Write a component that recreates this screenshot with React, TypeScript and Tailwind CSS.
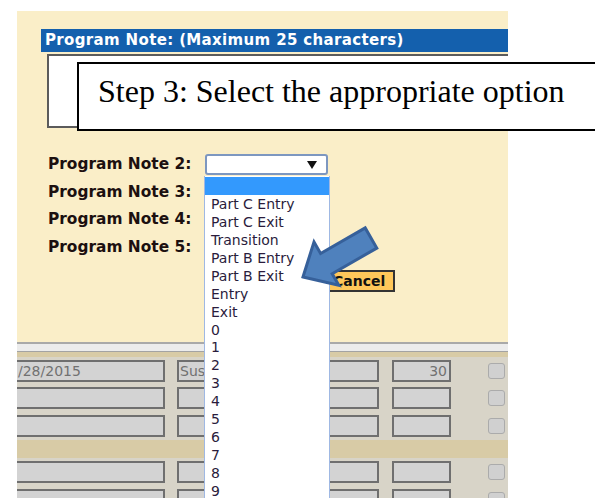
import React from 'react';

const NOTE_OPTIONS = [
  'Part C Entry',
  'Part C Exit',
  'Transition',
  'Part B Entry',
  'Part B Exit',
  'Entry',
  'Exit',
  '0',
  '1',
  '2',
  '3',
  '4',
  '5',
  '6',
  '7',
  '8',
  '9',
];

const NOTE_LABELS = ['Program Note 2:', 'Program Note 3:', 'Program Note 4:', 'Program Note 5:'];

function Field({ width, text, align = 'left', noLeft = false }: { width: string; text?: string; align?: 'left' | 'right'; noLeft?: boolean }) {
  return (
    <div
      className={`${width} h-[22px] shrink-0 bg-[#d3d3d3] border-2 border-[#6f6f6f] ${noLeft ? 'border-l-0' : ''} flex items-center overflow-hidden text-[14px] leading-none text-[#717171] ${
        align === 'right' ? 'justify-end pr-[2px] text-[#5d6e85]' : 'pl-[1px]'
      }`}
    >
      {text}
    </div>
  );
}

function CheckBox() {
  return <div className="w-[17px] h-[16px] shrink-0 rounded-[3px] bg-[#d0d0d0] border border-[#ababab]" />;
}

function GridRow({ date, status, days }: { date?: string; status?: string; days?: string }) {
  return (
    <div className="flex items-center h-[22px]">
      <Field width="w-[148px]" text={date} noLeft />
      <div className="ml-[12px]">
        <Field width="w-[90px]" text={status} />
      </div>
      <div className="ml-[10px]">
        <Field width="w-[102px]" />
      </div>
      <div className="ml-[13px]">
        <Field width="w-[59px]" text={days} align="right" />
      </div>
      <div className="ml-[37px]">
        <CheckBox />
      </div>
    </div>
  );
}

export default function App() {
  return (
    <div className="relative w-[595px] h-[498px] overflow-hidden bg-white font-['DejaVu_Sans',sans-serif]">
      {/* note editor panel */}
      <div className="ml-[17px] mt-[11px] w-[491px] bg-[#faeec8] pt-[18px] pb-[50px]">
        <div className="ml-[24px] h-[23px] bg-[#1460ad] flex items-center pl-[4px] text-[15px] tracking-[0.35px] font-bold text-white whitespace-nowrap">
          Program Note: (Maximum 25 characters)
        </div>
        <div className="ml-[30px] mt-[2px] h-[74px] bg-white border-2 border-r-0 border-[#5b5b5b]" />

        <div className="mt-[23px] pl-[31px]">
          {NOTE_LABELS.map((label, i) => (
            <div key={label} className="flex items-center h-[27.5px]">
              <span className="w-[157px] shrink-0 text-[15.4px] font-bold text-[#1c1010] whitespace-nowrap">{label}</span>
              {i === 0 && (
                <div className="w-[123px] h-[21px] bg-white border-2 border-[#7d97c0] rounded-[3px] flex items-center justify-end pr-[9px]">
                  <svg width="10" height="8" viewBox="0 0 10 8">
                    <polygon points="0,0 10,0 5,8" fill="#111" />
                  </svg>
                </div>
              )}
            </div>
          ))}
        </div>

        <div className="mt-[9px] pl-[308px] flex">
          <button className="w-[70px] h-[22px] bg-[#ffc75a] border-2 border-[#333] text-left pl-[6px] text-[14px] font-bold text-[#111] leading-none">
            Cancel
          </button>
        </div>
      </div>

      {/* separators under the panel */}
      <div className="ml-[17px] w-[491px]">
        <div className="h-[2px] bg-[#a9a9a9]" />
        <div className="h-[7px] bg-[#ececec]" />
        <div className="h-[1px] bg-[#a3a3a3]" />
        <div className="h-[5px] bg-[#d8cba6]" />
      </div>

      {/* enrollment grid */}
      <div className="ml-[17px] w-[491px] bg-[#d8d4c8] pt-[3px] h-[200px] overflow-hidden">
        <GridRow date="/28/2015" status="Sus" days="30" />
        <div className="mt-[5px]">
          <GridRow />
        </div>
        <div className="mt-[6px]">
          <GridRow />
        </div>
        <div className="mt-[3px] h-[18px] bg-[#d8cba6]" />
        <div className="mt-[3px]">
          <GridRow />
        </div>
        <div className="mt-[6px]">
          <GridRow />
        </div>
      </div>

      {/* callout over the note box */}
      <div className="absolute left-[77px] top-[62px] w-[540px] h-[69px] bg-white border-2 border-black pl-[19px] pt-[9px]">
        <span className="text-[32px] leading-[37px] text-black whitespace-nowrap font-['Liberation_Serif',serif]">
          Step 3: Select the appropriate option
        </span>
      </div>

      {/* open select list */}
      <div className="absolute left-[204px] top-[176px] bottom-0 w-[126px] bg-white border-x border-[#9fb8e3] pt-[1px]">
        <div className="h-[18px] bg-[#3399fd]" />
        {NOTE_OPTIONS.map(opt => (
          <div key={opt} className="h-[17.94px] flex items-center pl-[6px] text-[14px] leading-none text-[#2a1c3c] whitespace-nowrap">
            {opt}
          </div>
        ))}
      </div>

      {/* pointer arrow */}
      <svg className="absolute inset-0 pointer-events-none" width="595" height="498" viewBox="0 0 595 498">
        <polygon
          points="303,277 338.8,285.3 332.2,273.7 376.8,248.1 365.2,227.9 320.6,253.5 314,241.9"
          fill="#4f81bd"
          stroke="#36609a"
          strokeWidth="3"
          strokeLinejoin="miter"
        />
      </svg>
    </div>
  );
}
